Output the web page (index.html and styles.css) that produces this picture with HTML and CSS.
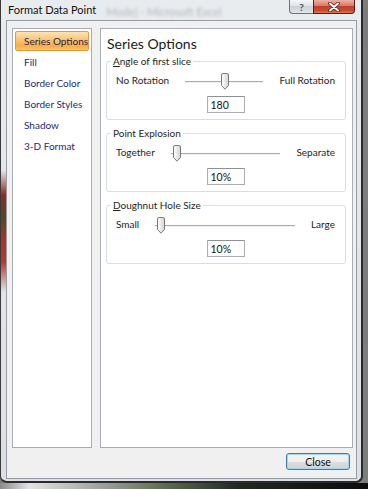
FILE: index.html
```html
<!DOCTYPE html>
<html lang="en">
<head>
  <meta charset="UTF-8" />
  <title>Format Data Point</title>
  <link rel="stylesheet" href="styles.css">
</head>
<body>
  <div class="screen">
    <div class="window">
      <div class="titlebar">
        <span class="title">Format Data Point</span>
        <span class="ghost">Mode] - Microsoft Excel</span>
        <div class="caption-btns">
          <span class="cap-btn help">?</span>
          <span class="cap-btn close">
            <svg width="14" height="10" viewBox="0 0 14 10">
              <path d="M3 1.5 L11 8.5 M11 1.5 L3 8.5" stroke="#5a1a12" stroke-width="3.6" stroke-linecap="round"/>
              <path d="M3 1.5 L11 8.5 M11 1.5 L3 8.5" stroke="#fff" stroke-width="2" stroke-linecap="round"/>
            </svg>
          </span>
        </div>
      </div>

      <div class="client">
        <div class="main">
          <ul class="nav">
            <li class="active">Series Options</li>
            <li>Fill</li>
            <li>Border Color</li>
            <li>Border Styles</li>
            <li>Shadow</li>
            <li>3-D Format</li>
          </ul>

          <div class="panel">
            <h1>Series Options</h1>

            <fieldset class="group">
              <legend><u>A</u>ngle of first slice</legend>
              <div class="slider-row">
                <span>No Rotation</span>
                <div class="slider">
                  <svg class="thumb" style="--pos: 0.5" width="10" height="17" viewBox="0 0 10 17">
                    <defs>
                      <linearGradient id="tg" x1="0" y1="0" x2="1" y2="0">
                        <stop offset="0" stop-color="#ffffff"/>
                        <stop offset="1" stop-color="#d4d4d4"/>
                      </linearGradient>
                    </defs>
                    <path d="M1.5 2 Q1.5 0.5 3 0.5 H7 Q8.5 0.5 8.5 2 V12.5 L5 16.2 L1.5 12.5 Z" fill="url(#tg)" stroke="#7a7a7a"/>
                  </svg>
                </div>
                <span>Full Rotation</span>
              </div>
              <input class="value" type="text" value="180">
            </fieldset>

            <fieldset class="group">
              <legend>Point Explosion</legend>
              <div class="slider-row">
                <span>Together</span>
                <div class="slider">
                  <svg class="thumb" style="--pos: 0" width="10" height="17" viewBox="0 0 10 17">
                    <path d="M1.5 2 Q1.5 0.5 3 0.5 H7 Q8.5 0.5 8.5 2 V12.5 L5 16.2 L1.5 12.5 Z" fill="url(#tg)" stroke="#7a7a7a"/>
                  </svg>
                </div>
                <span>Separate</span>
              </div>
              <input class="value" type="text" value="10%">
            </fieldset>

            <fieldset class="group">
              <legend><u>D</u>oughnut Hole Size</legend>
              <div class="slider-row">
                <span>Small</span>
                <div class="slider">
                  <svg class="thumb" style="--pos: 0" width="10" height="17" viewBox="0 0 10 17">
                    <path d="M1.5 2 Q1.5 0.5 3 0.5 H7 Q8.5 0.5 8.5 2 V12.5 L5 16.2 L1.5 12.5 Z" fill="url(#tg)" stroke="#7a7a7a"/>
                  </svg>
                </div>
                <span>Large</span>
              </div>
              <input class="value" type="text" value="10%">
            </fieldset>
          </div>
        </div>

        <div class="footer">
          <button class="btn-close">Close</button>
        </div>
      </div>
    </div>
    <div class="under-shadow"></div>
  </div>
</body>
</html>
```

FILE: styles.css
```css
* { box-sizing: border-box; }

body {
  margin: 0;
  background: #7d7d7d;
  font-family: Lato, "Liberation Sans", sans-serif;
  font-size: 10px;
  color: #1e1e1e;
  overflow: hidden;
}

.screen {
  width: 368px;
  height: 489px;
}

/* glass frame */
.window {
  width: 363px;
  height: 483px;
  border-left: 1px solid #3a3a3a;
  border-right: 2px solid #2a2a2a;
  border-bottom: 2px solid #2a2a2a;
  border-radius: 0 0 7px 7px;
  padding: 0 4px 2px 5px;
  background:
    linear-gradient(rgba(0,0,0,0) 170px, #8e2a26 195px, #4f4a26 218px, #a8322c 240px, #b23a34 262px, rgba(0,0,0,0) 292px) 0 0 / 5px 100% no-repeat,
    linear-gradient(#e9ecef, #dcdfe3);
}

.titlebar {
  height: 20px;
  display: flex;
  align-items: flex-start;
}

.title {
  margin: 3px 0 0 2px;
  font-size: 11px;
  color: #111;
}

.ghost {
  margin: 5px 0 0 10px;
  font-size: 11px;
  color: #b4b7bb;
  filter: blur(1.4px);
}

.caption-btns {
  margin: 0 2px 0 auto;
  display: flex;
}

.cap-btn {
  height: 14px;
  display: flex;
  align-items: center;
  justify-content: center;
}

.help {
  width: 24px;
  border: 1px solid #6c7480;
  border-top: none;
  border-right: none;
  border-radius: 0 0 0 4px;
  background: linear-gradient(#f5f7f9, #dde1e6 50%, #ccd2d8 50%, #e1e5e9);
  font-weight: bold;
  font-size: 10px;
  color: #4a525c;
}

.close {
  width: 42px;
  border: 1px solid #5a1e16;
  border-top: none;
  border-radius: 0 0 4px 0;
  background: linear-gradient(#eab0a4, #d97a66 45%, #c2402a 50%, #c84a34 80%, #dc7a5c);
}

/* dialog body */
.client {
  height: 459px;
  border: 1px solid #979ca4;
  background: #f0f0f0;
  padding: 7px 3px 0 5px;
}

.main {
  display: flex;
  gap: 8px;
  height: 420px;
}

.nav {
  list-style: none;
  margin: 0;
  width: 80px;
  padding: 2px;
  background: #fff;
  border: 1px solid #a9adb5;
}

.nav li {
  height: 20px;
  line-height: 19px;
  margin-bottom: 1px;
  padding-left: 8px;
  border: 1px solid transparent;
  border-radius: 2px;
  color: #1f2a72;
  white-space: nowrap;
}

.nav li.active {
  border-color: #e59a3a;
  background: linear-gradient(#fde3b4, #fbc67a 40%, #f8ad48 75%, #fbc26c);
  color: #2b2447;
}

.panel {
  width: 253px;
  background: #fff;
  border: 1px solid #a9adb5;
  padding: 7px 6px 0 5px;
}

.panel h1 {
  margin: 0 0 3px 1px;
  font-size: 14px;
  line-height: 16px;
  font-weight: normal;
  color: #1a1a1a;
}

.group {
  margin: 0 0 7px 0;
  padding: 3px 10px 6px 9px;
  border: 1px solid #d6dfe6;
  border-radius: 3px;
  display: flex;
  flex-direction: column;
  align-items: center;
}

.group legend {
  margin-left: -5px;
  padding: 0 2px;
  line-height: 13px;
}

.slider-row {
  align-self: stretch;
  height: 17px;
  display: flex;
  align-items: center;
}

.slider {
  flex: 1;
  margin: 0 16px;
  height: 2px;
  border-top: 1px solid #a9abae;
  border-bottom: 1px solid #f2f2f2;
  position: relative;
  top: 2px;
}

.thumb {
  position: absolute;
  top: -9px;
  left: calc(1px + (100% - 11px) * var(--pos));
}

.value {
  margin-top: 8px;
  width: 38px;
  height: 17px;
  border: 1px solid #abadb3;
  border-top-color: #8e9298;
  padding: 0 3px;
  font: inherit;
  font-size: 10.5px;
  color: #111;
  background: #fff;
}

.footer {
  display: flex;
  justify-content: flex-end;
  padding: 5px 3px 0 0;
}

.btn-close {
  width: 64px;
  height: 17px;
  padding: 0;
  border: 1px solid #3c7fb1;
  border-radius: 3px;
  background: linear-gradient(#f6f6f6, #ececec 50%, #dedede 50%, #d2d2d2);
  box-shadow: inset 0 0 0 1px #9fd6f3;
  font: inherit;
  font-size: 10.5px;
  color: #111;
}

.under-shadow {
  height: 6px;
  background: linear-gradient(to right, #8a8a8a, #e3e3e3 8%, #a6aaa4 25%, #5c6a52 45%, #202820 65%, #0c0c0c);
  filter: blur(0.6px);
}
```
